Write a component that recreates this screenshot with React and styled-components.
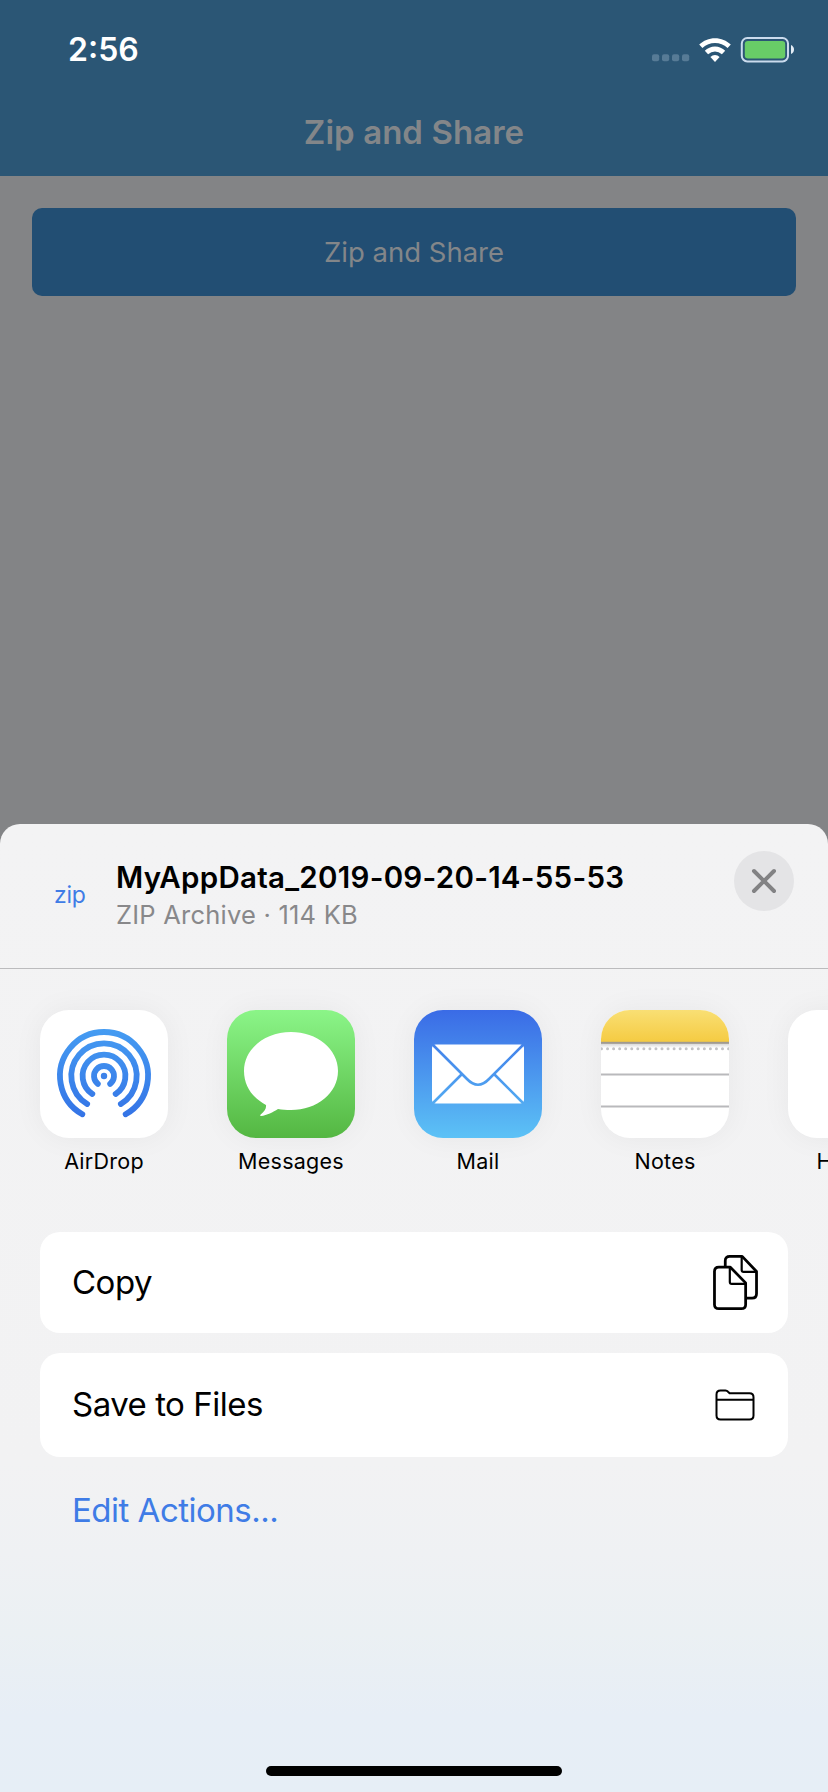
import React from 'react';
import styled, { createGlobalStyle } from 'styled-components';

const GlobalStyle = createGlobalStyle`
  * { box-sizing: border-box; }
  body { margin: 0; background: #838486; font-family: Inter, "Liberation Sans", sans-serif; }
`;

const Screen = styled.div`
  width: 828px;
  height: 1792px;
  display: flex;
  flex-direction: column;
  overflow: hidden;
  background: #838486;
`;

const AppHeader = styled.header`
  height: 176px;
  flex: none;
  background: #2b5675;
  color: #838689;
`;

const StatusBar = styled.div`
  height: 88px;
  padding: 12px 34px 0 68px;
  display: flex;
  align-items: center;
  justify-content: space-between;
  color: #fff;
`;

const Time = styled.span`
  font-size: 32px;
  font-weight: 600;
  line-height: 40px;
`;

const StatusIcons = styled.div`
  display: flex;
  align-items: flex-end;
  gap: 9px;
`;

const NavTitle = styled.h1`
  margin: 0;
  height: 88px;
  display: flex;
  align-items: center;
  justify-content: center;
  font-size: 33px;
  font-weight: 600;
  letter-spacing: 0.05px;
`;

const AppBody = styled.main`
  height: 648px;
  flex: none;
  padding: 32px;
`;

const PrimaryButton = styled.button`
  display: block;
  width: 100%;
  height: 88px;
  padding: 0;
  border: 0;
  border-radius: 10px;
  background: #224e73;
  color: #838689;
  font: 400 27.5px Inter, sans-serif;
`;

const SheetBackdrop = styled.div`
  flex: 1;
  min-height: 0;
  background: #838486;
`;

const Sheet = styled.section`
  height: 100%;
  display: flex;
  flex-direction: column;
  border-radius: 20px 20px 0 0;
  overflow: hidden;
  background: linear-gradient(#f3f3f4 0, #f2f2f3 640px, #eff1f3 730px, #ebf0f3 810px, #e7eef6 890px, #e6eef6 100%);
`;

const FileHeader = styled.header`
  height: 145px;
  flex: none;
  display: flex;
  align-items: flex-start;
  padding: 27px 34px 0 54px;
  border-bottom: 1px solid #bbbbbd;
`;

const FileType = styled.span`
  width: 62px;
  padding-top: 30px;
  color: #3f7ce6;
  font-size: 23px;
  line-height: 28px;
  letter-spacing: -0.3px;
`;

const FileInfo = styled.div`
  flex: 1;
  padding-top: 7px;
`;

const FileName = styled.div`
  font-size: 29.5px;
  line-height: 38px;
  font-weight: 600;
  letter-spacing: 0.27px;
  color: #000;
`;

const FileMeta = styled.div`
  font-size: 25.5px;
  line-height: 38px;
  letter-spacing: 0.22px;
  color: #88888a;
`;

const CloseButton = styled.button`
  width: 60px;
  height: 60px;
  padding: 0;
  border: 0;
  border-radius: 50%;
  background: #e4e4e6;
  display: flex;
  align-items: center;
  justify-content: center;
`;

const AppRow = styled.div`
  height: 263px;
  flex: none;
  padding: 41px 0 0 24px;
  display: flex;
  gap: 27px;
  overflow: hidden;
`;

const AppItem = styled.div`
  width: 160px;
  flex: none;
  display: flex;
  flex-direction: column;
  align-items: center;
`;

const AppTile = styled.div`
  width: 128px;
  height: 128px;
  border-radius: 29px;
  overflow: hidden;
  background: ${(p) => p.$fill};
  box-shadow: 0 0 30px rgba(0, 0, 0, 0.05);

  svg { display: block; }
`;

const AppLabel = styled.span`
  width: ${(p) => (p.$width ? `${p.$width}px` : 'auto')};
  margin-top: 8px;
  font-size: 21.5px;
  line-height: 30px;
  letter-spacing: 0.25px;
  color: #000;
  white-space: nowrap;
`;

const ActionList = styled.div`
  padding: 0 40px;
  display: flex;
  flex-direction: column;
  gap: 20px;
`;

const Action = styled.div`
  height: ${(p) => p.$height}px;
  padding: 0 ${(p) => p.$inset}px 0 32px;
  border-radius: 20px;
  background: #fff;
  display: flex;
  align-items: center;
  justify-content: space-between;
`;

const ActionLabel = styled.span`
  padding-bottom: 2px;
  font-size: 33px;
  line-height: 40px;
  letter-spacing: -0.5px;
  color: ${(p) => p.$color || '#000'};
`;

const EditLink = styled.div`
  padding: 13px 32px 0;
`;

const HomeBar = styled.div`
  width: 296px;
  height: 10px;
  margin: auto auto 16px;
  flex: none;
  border-radius: 5px;
  background: #000;
`;

const Signal = () => (
  <svg width="38" height="9" viewBox="0 0 38 9" fill="#577b96">
    {[0, 10, 20, 30].map((x) => <rect key={x} x={x} y="0.2" width="7.2" height="7" rx="2" />)}
  </svg>
);

const Wifi = () => (
  <svg width="32" height="25" viewBox="0 0 32 25" fill="#fff">
    <path d="M16 0.2C22 0.2 27.6 2.6 31.8 6.6L28.6 10Q23 4.9 16 4.9T3.4 10L0.2 6.6C4.4 2.6 10 0.2 16 0.2Z" />
    <path d="M16 8.5C20 8.5 23.5 10.1 26.2 12.8L22.9 16.2Q19.8 13.4 16 13.4T9.1 16.2L5.8 12.8C8.5 10.1 12 8.5 16 8.5Z" />
    <path d="M16 16.9Q18.6 16.9 20.6 18.9L16 24L11.4 18.9Q13.4 16.9 16 16.9Z" />
  </svg>
);

const Battery = () => (
  <svg width="54" height="26" viewBox="0 0 54 26">
    <rect x="1.8" y="1" width="46.2" height="23.4" rx="5.5" fill="none" stroke="#cbdbed" strokeWidth="2" />
    <rect x="4.8" y="4" width="40.4" height="17.4" rx="3.2" fill="#68cd67" />
    <path d="M51 8Q54 9.5 54 12.5T51 17Z" fill="#e4edf6" />
  </svg>
);

const CloseIcon = () => (
  <svg width="26" height="26" viewBox="0 0 26 26" stroke="#828284" strokeWidth="4" strokeLinecap="round">
    <path d="M3 3L23 23M23 3L3 23" />
  </svg>
);

const arc = (r, deg) => {
  const a = (deg * Math.PI) / 180;
  const dx = r * Math.sin(a);
  const dy = r * Math.cos(a);
  return `M${64 - dx} ${66 + dy}A${r} ${r} 0 1 1 ${64 + dx} ${66 + dy}`;
};

const AirDropIcon = () => (
  <svg width="128" height="128" viewBox="0 0 128 128">
    <defs>
      <linearGradient id="air" gradientUnits="userSpaceOnUse" x1="0" y1="19" x2="0" y2="108">
        <stop offset="0" stopColor="#459cf2" />
        <stop offset="1" stopColor="#3473e6" />
      </linearGradient>
    </defs>
    <g fill="none" stroke="url(#air)" strokeWidth="5.8" strokeLinecap="round">
      <path d={arc(44, 29.5)} />
      <path d={arc(32.7, 31)} />
      <path d={arc(21.4, 33)} />
      <path d={arc(10, 38)} />
    </g>
    <circle cx="64" cy="66" r="3.2" fill="#3d83ea" />
  </svg>
);

const MessagesIcon = () => (
  <svg width="128" height="128" viewBox="0 0 128 128" fill="#fff">
    <path d="M64 22C90 22 111 39 111 61S90 100 64 100C59 100 55 99.6 51 99C46 102 40 105.5 34 106C33 106 33 105 34 104.3C37.5 101.5 39.5 98.5 39 95C25.5 88 17 76 17 61C17 39 38 22 64 22Z" />
  </svg>
);

const MailIcon = () => (
  <svg width="128" height="128" viewBox="0 0 128 128">
    <defs>
      <linearGradient id="mail" gradientUnits="userSpaceOnUse" x1="0" y1="0" x2="0" y2="128">
        <stop offset="0" stopColor="#3a6be6" />
        <stop offset="1" stopColor="#5cc2f6" />
      </linearGradient>
    </defs>
    <rect x="18" y="34.5" width="92" height="59" rx="4" fill="#fff" />
    <g fill="none" stroke="url(#mail)" strokeWidth="2.6">
      <path d="M18.5 34.5L53 69Q64 80.5 75 69L109.5 34.5" />
      <path d="M18.5 93.5L47.5 64.5M109.5 93.5L80.5 64.5" />
    </g>
  </svg>
);

const NotesIcon = () => (
  <svg width="128" height="128" viewBox="0 0 128 128">
    <defs>
      <linearGradient id="notes" x1="0" y1="0" x2="0" y2="1">
        <stop offset="0" stopColor="#f9df74" />
        <stop offset="1" stopColor="#f5cb42" />
      </linearGradient>
      <linearGradient id="notesEdge" x1="0" y1="0" x2="0" y2="1">
        <stop offset="0" stopColor="#d0d0d0" />
        <stop offset="1" stopColor="#ffffff" />
      </linearGradient>
    </defs>
    <rect width="128" height="32" fill="url(#notes)" />
    <rect y="33" width="128" height="5" fill="url(#notesEdge)" />
    <rect y="31.8" width="128" height="2" fill="#a09a90" />
    <path d="M0.5 38.7H128" stroke="#c3c3c6" strokeWidth="3" strokeLinecap="round" strokeDasharray="0 6.05" />
    <path d="M0 64.5H128M0 96.5H128" stroke="#b9b9bc" strokeWidth="2" />
  </svg>
);

const CopyIcon = () => (
  <svg width="45" height="55" viewBox="0.1 0.3 45.3 55.6" fill="none" stroke="#000" strokeWidth="2.8" strokeLinejoin="round">
    <path d="M12.4 12V6Q12.4 1.7 17 1.7H29.5L44 17V39.5Q44 44 39.5 44H34" />
    <path d="M29 2V15.4Q29 17.4 31 17.4H43.5" strokeWidth="2.2" />
    <path d="M6 12.6H17.5L33 28.5V50.5Q33 54.5 28.5 54.5H6Q1.5 54.5 1.5 50.5V17Q1.5 12.6 6 12.6Z" fill="#fff" />
    <path d="M17 13V27.5Q17 29.5 19 29.5H33" strokeWidth="2.2" />
  </svg>
);

const FolderIcon = () => (
  <svg width="40" height="32" viewBox="0 0 40 32" fill="none" stroke="#000" strokeWidth="2">
    <path d="M1.5 26.5V5.5Q1.5 1.5 5.5 1.5H10.5Q12 1.5 13 2.7L14.6 4.2H34.5Q38.5 4.2 38.5 8.2V26.5Q38.5 30.5 34.5 30.5H5.5Q1.5 30.5 1.5 26.5Z" />
    <path d="M1.5 10.7H38.5" />
  </svg>
);

const apps = [
  { name: 'AirDrop', fill: '#fff', Icon: AirDropIcon },
  { name: 'Messages', fill: 'linear-gradient(#8bf588, #54b742)', Icon: MessagesIcon },
  { name: 'Mail', fill: 'linear-gradient(#3a6be6, #5cc2f6)', Icon: MailIcon },
  { name: 'Notes', fill: '#fff', Icon: NotesIcon },
  { name: 'H', fill: '#fff', labelWidth: 71 },
];

export default function App() {
  return (
    <Screen>
      <GlobalStyle />
      <AppHeader>
        <StatusBar>
          <Time>2:56</Time>
          <StatusIcons>
            <Signal />
            <Wifi />
            <Battery />
          </StatusIcons>
        </StatusBar>
        <NavTitle>Zip and Share</NavTitle>
      </AppHeader>
      <AppBody>
        <PrimaryButton>Zip and Share</PrimaryButton>
      </AppBody>
      <SheetBackdrop>
        <Sheet>
          <FileHeader>
            <FileType>zip</FileType>
            <FileInfo>
              <FileName>MyAppData_2019-09-20-14-55-53</FileName>
              <FileMeta>ZIP Archive · 114 KB</FileMeta>
            </FileInfo>
            <CloseButton aria-label="Close"><CloseIcon /></CloseButton>
          </FileHeader>
          <AppRow>
            {apps.map(({ name, fill, Icon, labelWidth }) => (
              <AppItem key={name}>
                <AppTile $fill={fill}>{Icon && <Icon />}</AppTile>
                <AppLabel $width={labelWidth}>{name}</AppLabel>
              </AppItem>
            ))}
          </AppRow>
          <ActionList>
            <Action $height={101} $inset={30}><ActionLabel>Copy</ActionLabel><CopyIcon /></Action>
            <Action $height={104} $inset={33}><ActionLabel>Save to Files</ActionLabel><FolderIcon /></Action>
            <EditLink><ActionLabel $color="#3f7ce6">Edit Actions...</ActionLabel></EditLink>
          </ActionList>
          <HomeBar />
        </Sheet>
      </SheetBackdrop>
    </Screen>
  );
}
